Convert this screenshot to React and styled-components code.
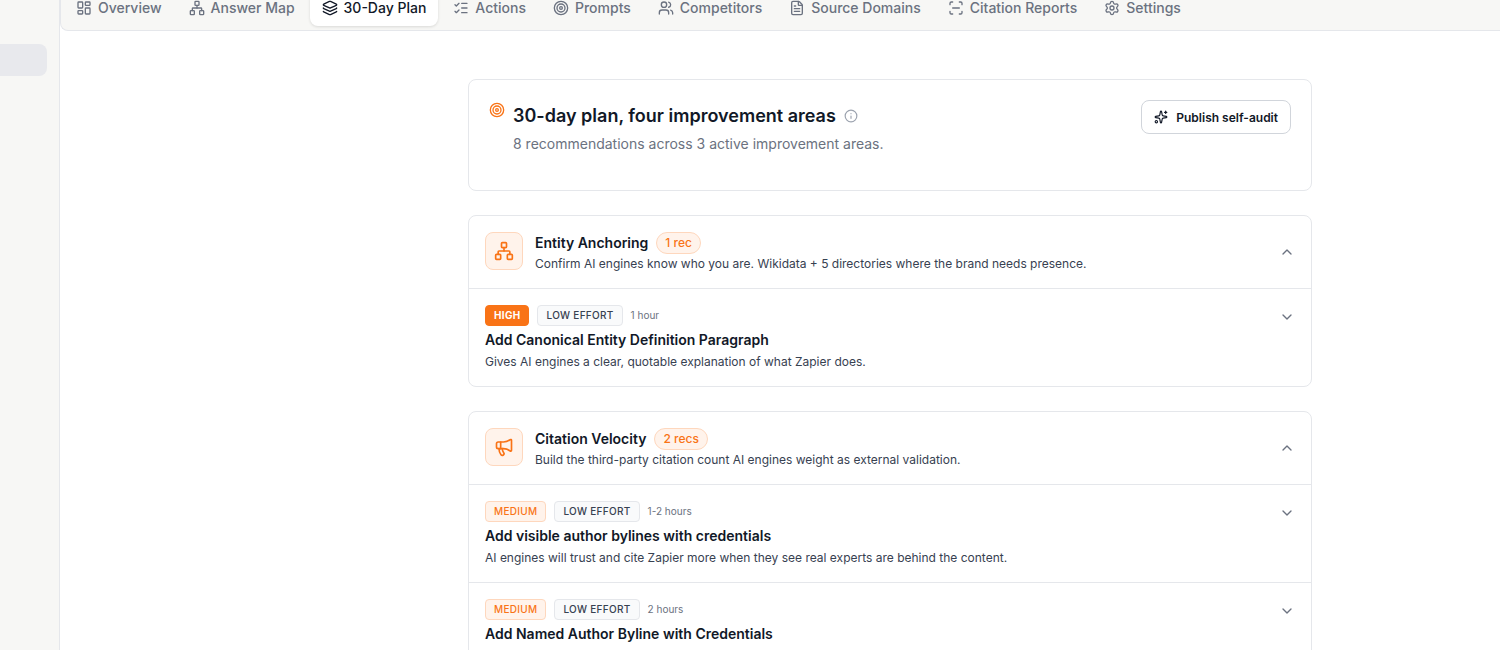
import styled, { createGlobalStyle } from 'styled-components';
import {
  LayoutDashboard,
  Network,
  Layers,
  ListChecks,
  Target,
  Users,
  FileText,
  ScanLine,
  Settings,
  Sparkles,
  Megaphone,
  ChevronUp,
  ChevronDown,
  Info,
} from 'lucide-react';

const GlobalStyle = createGlobalStyle`
  * {
    box-sizing: border-box;
  }

  body {
    margin: 0;
    background: #ffffff;
    color: #111827;
    font-family: Inter, 'Liberation Sans', sans-serif;
    overflow: hidden;
  }

  h1, h2, h3, p {
    margin: 0;
  }

  button {
    font-family: inherit;
    cursor: pointer;
  }
`;

const Shell = styled.div`
  display: flex;
  height: 100vh;
  overflow: hidden;
  background: #f7f7f5;
`;

const Sidebar = styled.aside`
  flex: none;
  width: 60px;
  padding: 44px 12px 0 0;
  border-right: 1px solid #e5e7eb;
`;

const SidebarLink = styled.a`
  display: block;
  height: 32px;
  border-radius: 0 8px 8px 0;
  background: #e8e9ed;
`;

const Main = styled.div`
  flex: 1;
  min-width: 0;
  background: #ffffff;
`;

const TabBar = styled.nav`
  display: flex;
  align-items: flex-end;
  gap: 3px;
  height: 31px;
  padding: 0 3px 4px;
  background: #f7f7f5;
  border-bottom: 1px solid #e5e7eb;
  border-left: 1px solid #e5e7eb;
  border-bottom-left-radius: 8px;
`;

const Tab = styled.a`
  display: flex;
  flex: none;
  align-items: center;
  gap: 6px;
  height: 36px;
  padding: 0 12px;
  border-radius: 8px;
  font-size: 14px;
  line-height: 20px;
  font-weight: 500;
  white-space: nowrap;
  text-decoration: none;
  color: ${props => (props.$active ? '#111827' : '#6b7280')};
  background: ${props => (props.$active ? '#ffffff' : 'transparent')};
  box-shadow: ${props => (props.$active ? '0 1px 3px rgba(0, 0, 0, 0.12)' : 'none')};
`;

const Page = styled.main`
  padding: 48px 0 0 220px;
`;

const Content = styled.div`
  display: flex;
  flex-direction: column;
  gap: 24px;
  max-width: 844px;
  margin: 0 auto;
`;

const Card = styled.section`
  border: 1px solid #e5e7eb;
  border-radius: 8px;
  background: #ffffff;
`;

const SummaryCard = styled(Card)`
  display: flex;
  align-items: flex-start;
  gap: 8px;
  padding: 20px 20px 36px;
`;

const SummaryIcon = styled.span`
  display: flex;
  padding-top: 2px;
  color: #f97316;
`;

const SummaryText = styled.div`
  flex: 1;
`;

const TitleRow = styled.div`
  display: flex;
  align-items: center;
  gap: 8px;
  padding-top: 2px;
  color: #9ca3af;
`;

const Title = styled.h1`
  font-size: 18px;
  line-height: 28px;
  font-weight: 600;
  color: #111827;
`;

const Subtitle = styled.p`
  padding-top: 4px;
  font-size: 14px;
  line-height: 20px;
  color: #6b7280;
`;

const PublishButton = styled.button`
  display: flex;
  align-items: center;
  gap: 8px;
  height: 34px;
  padding: 0 12px;
  border: 1px solid #d1d5db;
  border-radius: 8px;
  background: #ffffff;
  color: #111827;
  font-size: 12px;
  font-weight: 600;
`;

const AreaHeader = styled.header`
  display: flex;
  align-items: flex-start;
  gap: 12px;
  padding: 16px 16px 14px;
`;

const AreaIcon = styled.span`
  display: flex;
  align-items: center;
  justify-content: center;
  flex: none;
  width: 38px;
  height: 38px;
  border: 1px solid #fed7bd;
  border-radius: 8px;
  background: #fff3eb;
  color: #f97316;
`;

const AreaText = styled.div`
  flex: 1;
  min-width: 0;
`;

const AreaTitleRow = styled.div`
  display: flex;
  align-items: center;
  gap: 8px;
`;

const AreaTitle = styled.h2`
  font-size: 14px;
  line-height: 20px;
  font-weight: 600;
`;

const CountPill = styled.span`
  padding: 2px 8px;
  border: 1px solid #fed7bd;
  border-radius: 11px;
  background: #fff3eb;
  color: #f97316;
  font-size: 12px;
  line-height: 16px;
  font-weight: 500;
`;

const Description = styled.p`
  font-size: 12px;
  line-height: 20px;
  color: #374151;
`;

const ToggleButton = styled.button`
  display: flex;
  flex: none;
  padding: ${props => (props.$header ? '12px 0' : '4px 0')};
  border: 0;
  background: none;
  color: #6b7280;
`;

const Recommendation = styled.article`
  display: flex;
  align-items: flex-start;
  justify-content: space-between;
  padding: 16px 16px 14px;
  border-top: 1px solid #e5e7eb;
`;

const TagRow = styled.div`
  display: flex;
  align-items: center;
  gap: 8px;
`;

const tagColors = {
  high: { text: '#ffffff', fill: '#f97316', line: '#f97316' },
  medium: { text: '#f97316', fill: '#fff3eb', line: '#fed7bd' },
  effort: { text: '#374151', fill: '#f9fafb', line: '#e5e7eb' },
};

const Tag = styled.span`
  padding: 2px 8px;
  border: 1px solid ${props => tagColors[props.$tone].line};
  border-radius: 4px;
  background: ${props => tagColors[props.$tone].fill};
  color: ${props => tagColors[props.$tone].text};
  font-size: 10px;
  line-height: 15px;
  font-weight: ${props => (props.$tone === 'high' ? 700 : 500)};
  letter-spacing: 0.03em;
  text-transform: uppercase;
`;

const Duration = styled.span`
  font-size: 10px;
  line-height: 15px;
  color: #6b7280;
`;

const RecTitle = styled.h3`
  padding: 4px 0 2px;
  font-size: 14px;
  line-height: 20px;
  font-weight: 600;
`;

const tabs = [
  { label: 'Overview', Icon: LayoutDashboard },
  { label: 'Answer Map', Icon: Network },
  { label: '30-Day Plan', Icon: Layers, active: true },
  { label: 'Actions', Icon: ListChecks },
  { label: 'Prompts', Icon: Target },
  { label: 'Competitors', Icon: Users },
  { label: 'Source Domains', Icon: FileText },
  { label: 'Citation Reports', Icon: ScanLine },
  { label: 'Settings', Icon: Settings },
];

const areas = [
  {
    title: 'Entity Anchoring',
    count: '1 rec',
    Icon: Network,
    description: 'Confirm AI engines know who you are. Wikidata + 5 directories where the brand needs presence.',
    items: [
      {
        impact: 'high',
        time: '1 hour',
        title: 'Add Canonical Entity Definition Paragraph',
        description: 'Gives AI engines a clear, quotable explanation of what Zapier does.',
      },
    ],
  },
  {
    title: 'Citation Velocity',
    count: '2 recs',
    Icon: Megaphone,
    description: 'Build the third-party citation count AI engines weight as external validation.',
    items: [
      {
        impact: 'medium',
        time: '1-2 hours',
        title: 'Add visible author bylines with credentials',
        description: 'AI engines will trust and cite Zapier more when they see real experts are behind the content.',
      },
      {
        impact: 'medium',
        time: '2 hours',
        title: 'Add Named Author Byline with Credentials',
      },
    ],
  },
];

const Area = ({ title, count, Icon, description, items }) => (
  <Card>
    <AreaHeader>
      <AreaIcon>
        <Icon size={20} />
      </AreaIcon>
      <AreaText>
        <AreaTitleRow>
          <AreaTitle>{title}</AreaTitle>
          <CountPill>{count}</CountPill>
        </AreaTitleRow>
        <Description>{description}</Description>
      </AreaText>
      <ToggleButton type="button" $header aria-label={`Collapse ${title}`}>
        <ChevronUp size={16} />
      </ToggleButton>
    </AreaHeader>
    {items.map((item) => (
      <Recommendation key={item.title}>
        <div>
          <TagRow>
            <Tag $tone={item.impact}>{item.impact}</Tag>
            <Tag $tone="effort">Low effort</Tag>
            <Duration>{item.time}</Duration>
          </TagRow>
          <RecTitle>{item.title}</RecTitle>
          {item.description && <Description>{item.description}</Description>}
        </div>
        <ToggleButton type="button" aria-label={`Expand ${item.title}`}>
          <ChevronDown size={16} />
        </ToggleButton>
      </Recommendation>
    ))}
  </Card>
);

export default function App() {
  return (
    <>
      <GlobalStyle />
      <Shell>
        <Sidebar>
          <SidebarLink href="#project" aria-label="Project" />
        </Sidebar>
        <Main>
          <TabBar>
            {tabs.map(({ label, Icon, active }) => (
              <Tab key={label} href="#" $active={active} aria-current={active ? 'page' : undefined}>
                <Icon size={16} />
                {label}
              </Tab>
            ))}
          </TabBar>
          <Page>
            <Content>
              <SummaryCard>
                <SummaryIcon>
                  <Target size={16} />
                </SummaryIcon>
                <SummaryText>
                  <TitleRow>
                    <Title>30-day plan, four improvement areas</Title>
                    <Info size={14} />
                  </TitleRow>
                  <Subtitle>8 recommendations across 3 active improvement areas.</Subtitle>
                </SummaryText>
                <PublishButton type="button">
                  <Sparkles size={14} />
                  Publish self-audit
                </PublishButton>
              </SummaryCard>
              {areas.map((area) => (
                <Area key={area.title} {...area} />
              ))}
            </Content>
          </Page>
        </Main>
      </Shell>
    </>
  );
}
